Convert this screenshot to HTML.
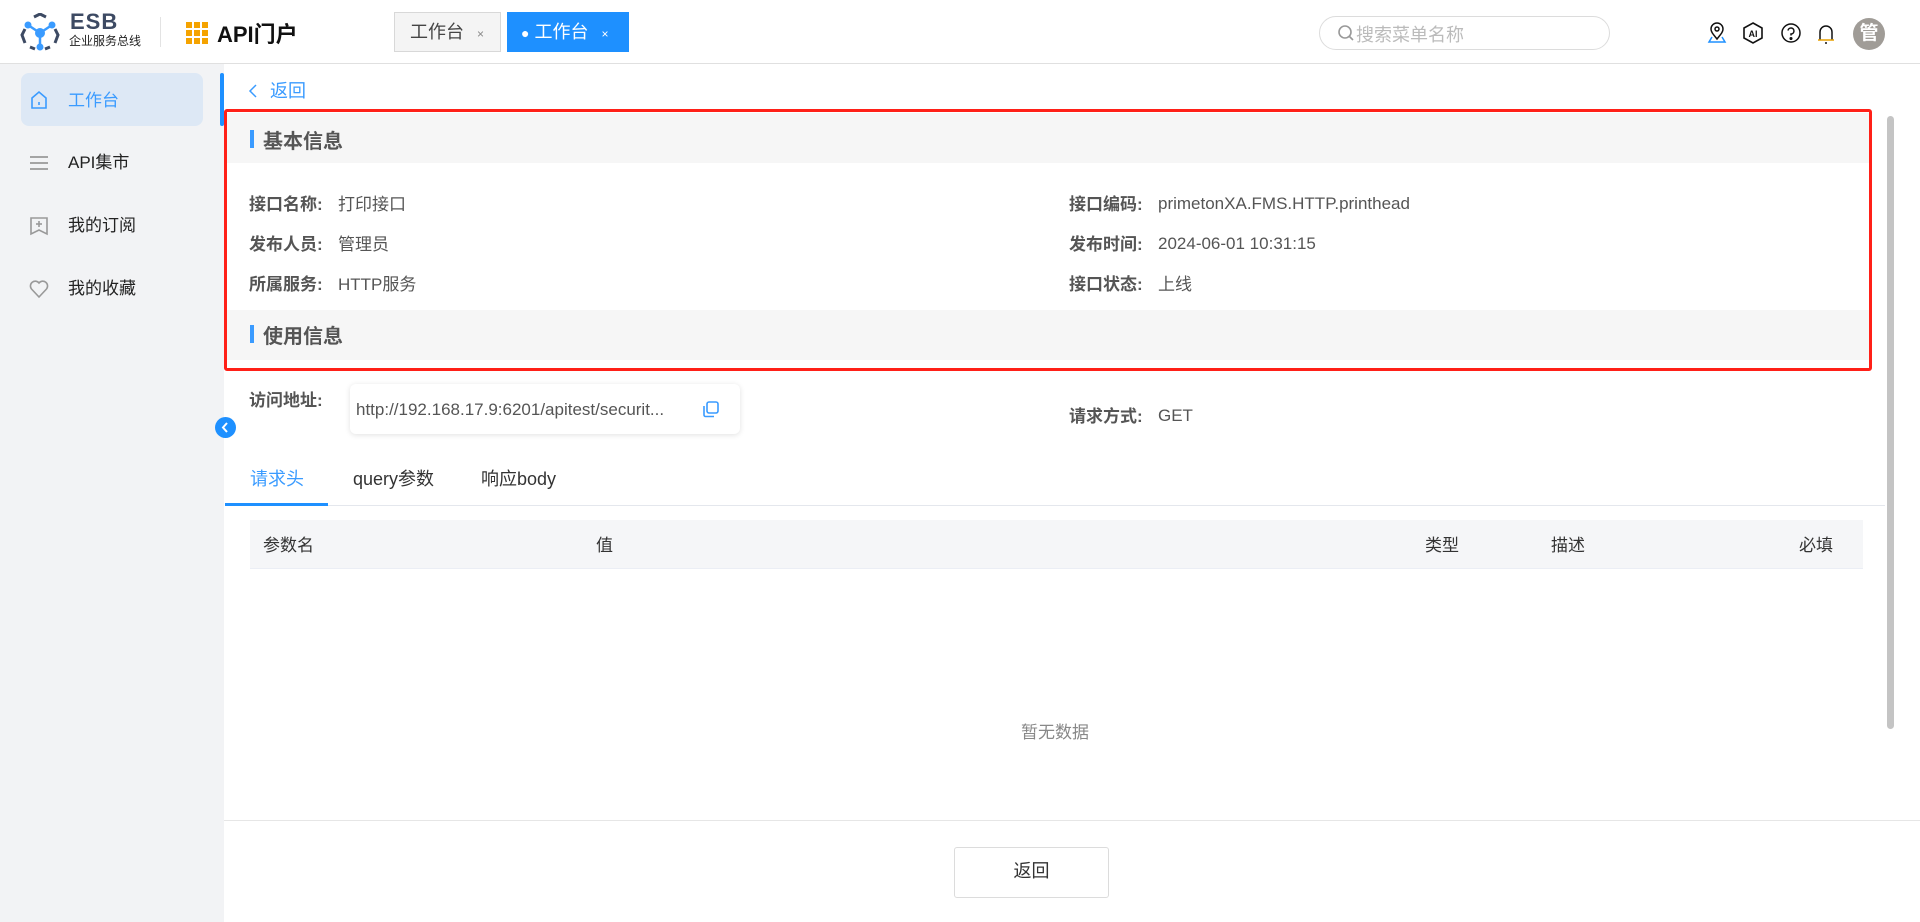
<!DOCTYPE html>
<html><head><meta charset="utf-8">
<style>
*{margin:0;padding:0;box-sizing:border-box}
body{width:1920px;height:922px;overflow:hidden;background:#fff;font-family:"Liberation Sans","Noto Sans CJK SC",sans-serif;color:#333;position:relative}
.a{position:absolute;white-space:nowrap}
.hdr{left:0;top:0;width:1920px;height:64px;border-bottom:1px solid #e0e0e0;background:#fff}
.side{left:0;top:64px;width:224px;height:858px;background:#f2f3f5}
.mi{font-size:17px;color:#222}
.lbl{font-size:17px;font-weight:bold;color:#555}
.val{font-size:17px;color:#555}
.band{background:#f6f6f6;height:50px}
.bt{font-size:20px;font-weight:bold;color:#555}
.bar{width:4px;height:18px;background:#3a9bff}
</style></head><body>
<div class="a hdr"></div>
<!-- logo -->
<svg class="a" style="left:20px;top:13px" width="40" height="38" viewBox="0 0 40 38">
<g fill="none" stroke="#3d4a63" stroke-width="3"><path d="M14 4 L20 1 L26 4"/><path d="M5 16 L2 22 L5 30"/><path d="M35 16 L38 22 L35 30"/><path d="M10 34 L15 36"/><path d="M30 34 L25 36"/></g>
<g stroke="#3a9bff" stroke-width="2.5"><line x1="20" y1="20" x2="8" y2="12"/><line x1="20" y1="20" x2="32" y2="12"/><line x1="20" y1="20" x2="20" y2="34"/></g>
<g fill="#3a9bff"><circle cx="20" cy="20" r="5"/><circle cx="8" cy="12" r="3.5"/><circle cx="32" cy="12" r="3.5"/><circle cx="20" cy="34" r="3.5"/></g></svg>
<div class="a" style="left:70px;top:9px;font-size:22px;font-weight:900;color:#3d4a63;letter-spacing:1px">ESB</div>
<div class="a" style="left:69px;top:32px;font-size:12px;color:#222">企业服务总线</div>
<div class="a" style="left:160px;top:17px;width:1px;height:30px;background:#e3e3e3"></div>
<svg class="a" style="left:186px;top:22px" width="22" height="22" viewBox="0 0 22 22" fill="#f5a300">
<rect x="0" y="0" width="6" height="6"/><rect x="8" y="0" width="6" height="6"/><rect x="16" y="0" width="6" height="6"/>
<rect x="0" y="8" width="6" height="6"/><rect x="8" y="8" width="6" height="6"/><rect x="16" y="8" width="6" height="6"/>
<rect x="0" y="16" width="6" height="6"/><rect x="8" y="16" width="6" height="6"/><rect x="16" y="16" width="6" height="6"/></svg>
<div class="a" style="left:217px;top:17px;font-size:22px;font-weight:bold;color:#111">API门户</div>
<div class="a" style="left:394px;top:12px;width:107px;height:40px;background:#f4f4f4;border:1px solid #d8d8d8;font-size:18px;color:#444;line-height:38px;padding-left:15px">工作台 <span style="font-size:12px;color:#888;margin-left:8px">×</span></div>
<div class="a" style="left:507px;top:12px;width:122px;height:40px;background:#1e90ff;font-size:18px;color:#fff;line-height:40px;padding-left:14px"><span style="font-size:14px">●</span> 工作台 <span style="font-size:12px;margin-left:8px">×</span></div>
<div class="a" style="left:1319px;top:16px;width:291px;height:34px;border:1px solid #dcdcdc;border-radius:17px"></div>
<svg class="a" style="left:1337px;top:24px" width="18" height="18" viewBox="0 0 18 18" fill="none" stroke="#999" stroke-width="1.6"><circle cx="8" cy="8" r="6"/><line x1="12.5" y1="12.5" x2="16" y2="16"/></svg>
<div class="a" style="left:1356px;top:21px;font-size:18px;color:#bbb">搜索菜单名称</div>
<svg class="a" style="left:1706px;top:22px" width="22" height="22" viewBox="0 0 22 22" fill="none" stroke="#111" stroke-width="1.5"><path d="M11 17 C7 12 5 10 5 7 A6 6 0 0 1 17 7 C17 10 15 12 11 17Z"/><circle cx="11" cy="7" r="2"/><path d="M6 15 L3 20 H19 L16 15" stroke="#1e90ff"/></svg>
<svg class="a" style="left:1742px;top:22px" width="22" height="22" viewBox="0 0 22 22" fill="none" stroke="#111" stroke-width="1.6"><path d="M11 1 L20 6 V16 L11 21 L2 16 V6Z"/><text x="11" y="15" font-size="9" font-weight="bold" text-anchor="middle" fill="#111" stroke="none" font-family="Liberation Sans">AI</text></svg>
<svg class="a" style="left:1780px;top:22px" width="22" height="22" viewBox="0 0 22 22" fill="none" stroke="#111" stroke-width="1.5"><circle cx="11" cy="11" r="9"/><path d="M8 8.5 A3 3 0 1 1 11 12 V13.5"/><circle cx="11" cy="16.5" r="0.8" fill="#111"/></svg>
<svg class="a" style="left:1815px;top:22px" width="22" height="24" viewBox="0 0 22 24" fill="none" stroke="#111" stroke-width="1.5"><path d="M5 18 V10 A6 6 0 0 1 17 10 V18"/><path d="M3 18 H19" stroke="#e8a000"/><path d="M10 21 H12"/></svg>
<div class="a" style="left:1853px;top:18px;width:32px;height:32px;border-radius:50%;background:#a09c97;color:#fff;font-size:19px;font-weight:bold;text-align:center;line-height:32px">管</div>

<!-- sidebar -->
<div class="a side"></div>
<div class="a" style="left:21px;top:73px;width:182px;height:53px;background:#dde8f5;border-radius:8px"></div>
<svg class="a" style="left:29px;top:90px" width="20" height="20" viewBox="0 0 20 20" fill="none" stroke="#3a9bff" stroke-width="1.6"><path d="M3 8 L10 2 L17 8 V18 H3Z"/><line x1="10" y1="12" x2="10" y2="15"/></svg>
<div class="a mi" style="left:68px;top:86px;color:#3a9bff">工作台</div>
<svg class="a" style="left:29px;top:153px" width="20" height="20" viewBox="0 0 20 20" stroke="#999" stroke-width="1.8"><line x1="1" y1="4" x2="19" y2="4"/><line x1="1" y1="10" x2="19" y2="10"/><line x1="1" y1="16" x2="19" y2="16"/></svg>
<div class="a mi" style="left:68px;top:148px">API集市</div>
<svg class="a" style="left:29px;top:216px" width="20" height="20" viewBox="0 0 20 20" fill="none" stroke="#999" stroke-width="1.6"><path d="M2 2 H18 V18 L10 14 L2 18Z"/><line x1="10" y1="5" x2="10" y2="11"/><line x1="7" y1="8" x2="13" y2="8"/></svg>
<div class="a mi" style="left:68px;top:211px">我的订阅</div>
<svg class="a" style="left:29px;top:279px" width="20" height="20" viewBox="0 0 20 20" fill="none" stroke="#999" stroke-width="1.6"><path d="M10 18 L2.5 10 A4.5 4.5 0 0 1 10 4 A4.5 4.5 0 0 1 17.5 10Z"/></svg>
<div class="a mi" style="left:68px;top:274px">我的收藏</div>
<div class="a" style="left:220px;top:73px;width:4px;height:53px;background:#1e90ff;border-radius:2px"></div>
<div class="a" style="left:215px;top:417px;width:21px;height:21px;border-radius:50%;background:#1e90ff"></div>
<svg class="a" style="left:215px;top:417px" width="21" height="21" viewBox="0 0 21 21" fill="none" stroke="#fff" stroke-width="2"><path d="M12 6 L8 10.5 L12 15"/></svg>

<!-- content -->
<svg class="a" style="left:247px;top:83px" width="12" height="16" viewBox="0 0 12 16" fill="none" stroke="#3a9bff" stroke-width="1.5"><path d="M9 2 L3 8 L9 14"/></svg>
<div class="a" style="left:270px;top:77px;font-size:18px;color:#3a9bff">返回</div>

<div class="a band" style="left:226px;top:113px;width:1643px"></div>
<div class="a bar" style="left:250px;top:130px"></div>
<div class="a bt" style="left:263px;top:125px">基本信息</div>
<div class="a lbl" style="left:249px;top:190px">接口名称:</div><div class="a val" style="left:338px;top:190px">打印接口</div>
<div class="a lbl" style="left:249px;top:230px">发布人员:</div><div class="a val" style="left:338px;top:230px">管理员</div>
<div class="a lbl" style="left:249px;top:270px">所属服务:</div><div class="a val" style="left:338px;top:270px">HTTP服务</div>
<div class="a lbl" style="left:1069px;top:190px">接口编码:</div><div class="a val" style="left:1158px;top:194px">primetonXA.FMS.HTTP.printhead</div>
<div class="a lbl" style="left:1069px;top:230px">发布时间:</div><div class="a val" style="left:1158px;top:234px">2024-06-01 10:31:15</div>
<div class="a lbl" style="left:1069px;top:270px">接口状态:</div><div class="a val" style="left:1158px;top:270px">上线</div>
<div class="a band" style="left:226px;top:310px;width:1643px;height:50px"></div>
<div class="a bar" style="left:250px;top:325px"></div>
<div class="a bt" style="left:263px;top:320px">使用信息</div>
<div class="a" style="left:224px;top:109px;width:1648px;height:262px;border:3px solid #ff2018;border-radius:3px"></div>

<div class="a lbl" style="left:249px;top:386px">访问地址:</div>
<div class="a" style="left:350px;top:384px;width:390px;height:50px;background:#fff;border-radius:6px;box-shadow:0 1px 6px rgba(0,0,0,0.12)"></div>
<div class="a val" style="left:356px;top:400px">http://192.168.17.9:6201/apitest/securit...</div>
<svg class="a" style="left:701px;top:400px" width="19" height="19" viewBox="0 0 19 19" fill="none" stroke="#3a9bff" stroke-width="1.6"><rect x="6" y="2" width="11" height="11" rx="2"/><path d="M3 6 V15 A1.5 1.5 0 0 0 4.5 16.5 H13"/></svg>
<div class="a lbl" style="left:1069px;top:402px">请求方式:</div><div class="a val" style="left:1158px;top:406px">GET</div>

<div class="a" style="left:250px;top:465px;font-size:18px;color:#3a9bff">请求头</div>
<div class="a" style="left:353px;top:465px;font-size:18px;color:#333">query参数</div>
<div class="a" style="left:481px;top:465px;font-size:18px;color:#333">响应body</div>
<div class="a" style="left:225px;top:505px;width:1660px;height:1px;background:#e4e7ed"></div>
<div class="a" style="left:225px;top:503px;width:103px;height:3px;background:#1e90ff"></div>

<div class="a" style="left:250px;top:520px;width:1613px;height:49px;background:#f5f6f8;border-bottom:1px solid #ebeef5"></div>
<div class="a val" style="left:263px;top:531px;color:#333">参数名</div>
<div class="a val" style="left:596px;top:531px;color:#333">值</div>
<div class="a val" style="left:1425px;top:531px;color:#333">类型</div>
<div class="a val" style="left:1551px;top:531px;color:#333">描述</div>
<div class="a val" style="left:1799px;top:531px;color:#333">必填</div>
<div class="a val" style="left:1021px;top:718px;color:#888">暂无数据</div>

<div class="a" style="left:1887px;top:116px;width:7px;height:613px;background:#c4c4c4;border-radius:4px"></div>
<div class="a" style="left:224px;top:820px;width:1696px;height:1px;background:#e6e6e6"></div>
<div class="a" style="left:954px;top:847px;width:155px;height:51px;border:1px solid #dcdcdc;border-radius:3px;font-size:18px;color:#333;text-align:center;line-height:47px">返回</div>
</body></html>
